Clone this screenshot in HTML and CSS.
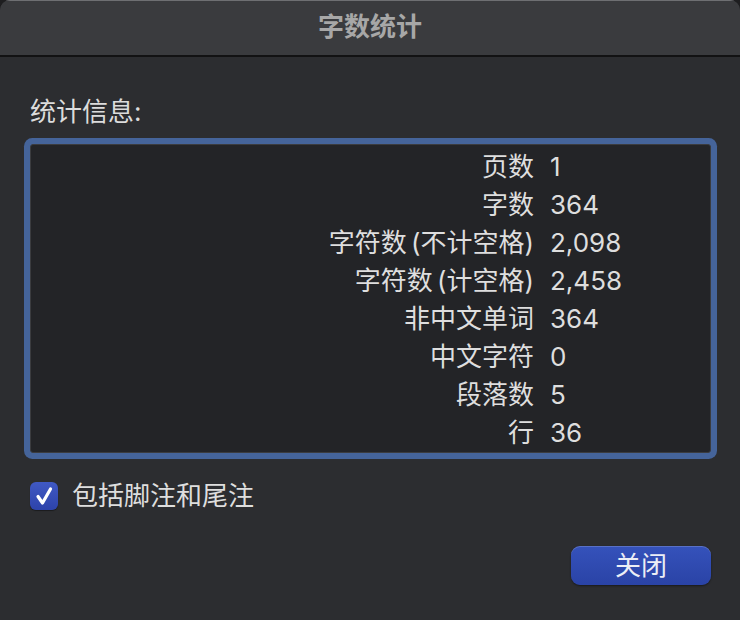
FILE: index.html
```html
<!DOCTYPE html>
<html lang="zh-CN">
<head>
    <meta charset="UTF-8">
    <meta name="viewport" content="width=device-width, initial-scale=1.0">
    <title>字数统计</title>
    <link rel="stylesheet" href="styles.css">
</head>
<body>
    <div class="window">
        <div class="titlebar">字数统计</div>

        <div class="content">
            <div class="section-label">统计信息:</div>

            <div class="stats">
                <div class="stat-name">页数</div><div class="stat-value">1</div>
                <div class="stat-name">字数</div><div class="stat-value">364</div>
                <div class="stat-name">字符数 (不计空格)</div><div class="stat-value">2,098</div>
                <div class="stat-name">字符数 (计空格)</div><div class="stat-value">2,458</div>
                <div class="stat-name">非中文单词</div><div class="stat-value">364</div>
                <div class="stat-name">中文字符</div><div class="stat-value">0</div>
                <div class="stat-name">段落数</div><div class="stat-value">5</div>
                <div class="stat-name">行</div><div class="stat-value">36</div>
            </div>

            <label class="check-row">
                <span class="checkbox">
                    <svg width="28" height="28" viewBox="0 0 28 28">
                        <path d="M8 14.5 L12.5 21 L20.5 7" fill="none" stroke="#ffffff" stroke-width="3.2" stroke-linecap="round" stroke-linejoin="round"/>
                    </svg>
                </span>
                <span class="check-text">包括脚注和尾注</span>
            </label>

            <div class="actions">
                <button class="close-button">关闭</button>
            </div>
        </div>
    </div>
</body>
</html>
```

FILE: styles.css
```css
html, body {
    margin: 0;
    padding: 0;
    background-color: #1e1e20;
}
body {
    font-family: "Inter", "Noto Sans CJK SC", sans-serif;
    color: #dedede;
    font-size: 26px;
}
.window {
    width: 740px;
    height: 620px;
    background-color: #2c2d30;
    border-radius: 10px 10px 0 0;
    overflow: hidden;
}
.titlebar {
    height: 57px;
    line-height: 51px;
    text-align: center;
    box-sizing: border-box;
    background-color: #3a3b3e;
    border-top: 1px solid #6e6f72;
    border-bottom: 2px solid #121213;
    font-weight: bold;
    color: #a7a7a7;
}
.content {
    padding: 40px 29px 0 30px;
}
.section-label {
    line-height: 30px;
    color: #dcdcdc;
}
.stats {
    margin-top: 17px;
    display: grid;
    grid-template-columns: 503px 1fr;
    column-gap: 16px;
    padding-top: 3px;
    background-color: #232427;
    border: 1px solid #3b3c3f;
    border-radius: 3px;
    box-shadow: 0 0 0 6px #45649a;
}
.stat-name {
    text-align: right;
    line-height: 38px;
    white-space: nowrap;
    word-spacing: -3px;
}
.stat-value {
    line-height: 38px;
}
.check-row {
    margin-top: 28px;
    display: flex;
    align-items: center;
    gap: 14px;
    height: 30px;
}
.checkbox {
    width: 28px;
    height: 28px;
    border-radius: 6px;
    background: linear-gradient(#4059c4, #2d43aa);
    box-shadow: 0 1px 1px rgba(0, 0, 0, 0.4);
    display: flex;
}
.check-text {
    line-height: 30px;
}
.actions {
    margin-top: 35px;
    display: flex;
    justify-content: flex-end;
}
.close-button {
    width: 140px;
    height: 39px;
    border: none;
    border-radius: 9px;
    background: linear-gradient(#3552bb, #2a43a6);
    box-shadow: inset 0 1px 0 rgba(255, 255, 255, 0.18), 0 1px 2px rgba(0, 0, 0, 0.45);
    color: #eceef6;
    font-family: "Inter", "Noto Sans CJK SC", sans-serif;
    font-size: 26px;
    line-height: 39px;
    padding: 0;
}
```
